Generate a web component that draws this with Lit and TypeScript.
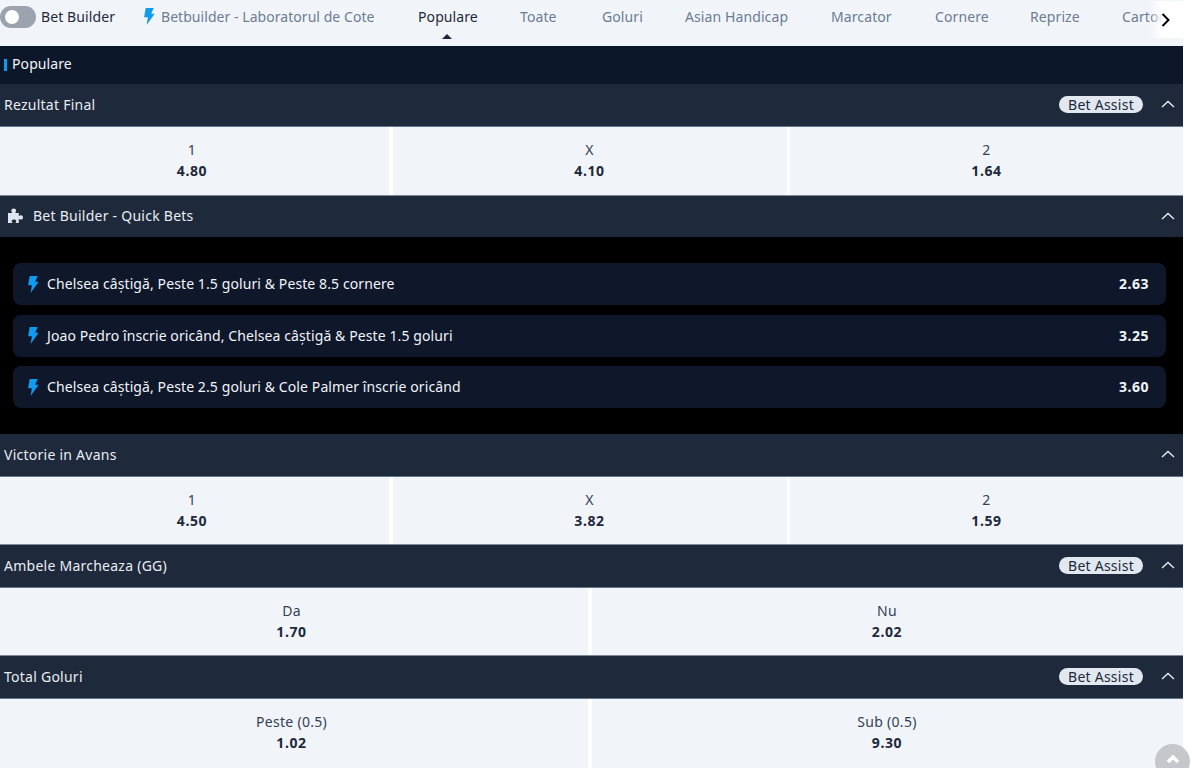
import { LitElement, html, css, svg } from "lit";
import { customElement } from "lit/decorators.js";

const bolt = (cls: string) => html`<svg class=${cls} viewBox="0 0 12 18"><path d="M2.500 0h8.500L8.300 6H12L3.500 18l1.300-8.200H.8z" fill="#0f9bee"/></svg>`;
const chevron = html`<svg class="chev" viewBox="0 0 14 8"><path d="M1 7l6-5.600L13 7" fill="none" stroke="#e6ebf2" stroke-width="1.400"/></svg>`;
const puzzle = svg`<path d="M1 6h4.200c-.6-1-.9-1.600-.9-2.300C4.300 2.300 5.400 1.500 6.700 1.500s2.400.8 2.400 2.200c0 .7-.3 1.300-.9 2.300h3.600v3c1-.6 1.500-.8 2.200-.8 1.300 0 2 1 2 2.200s-.7 2.200-2 2.200c-.7 0-1.200-.2-2.200-.8V16H8.500c.5-.9.700-1.300.700-1.900 0-1-.900-1.600-2.200-1.600s-2.300.6-2.300 1.600c0 .6.300 1 .8 1.900H1z" fill="#dfe5ee"/>`;

interface Odd { l: string; v: string }
const tabs = ["Toate", "Goluri", "Asian Handicap", "Marcator", "Cornere", "Reprize", "Cartonașe"];
const quick = [
  ["Chelsea câștigă, Peste 1.5 goluri & Peste 8.5 cornere", "2.63"],
  ["Joao Pedro înscrie oricând, Chelsea câștigă & Peste 1.5 goluri", "3.25"],
  ["Chelsea câștigă, Peste 2.5 goluri & Cole Palmer înscrie oricând", "3.60"],
];

@customElement("app-root")
export class AppRoot extends LitElement {
  static styles = css`
    :host { display: block; width: 1192px; height: 768px; overflow: hidden; background: #fff; position: relative;
      font-family: "Noto Sans", "Open Sans", sans-serif; font-size: 14px; letter-spacing: 0.1px; }
    .wrap { width: 1183px; }
    .topbar { height: 46px; background: #f1f5f9; display: flex; align-items: center; padding-bottom: 14px; box-sizing: border-box; position: relative; overflow: hidden; white-space: nowrap; color: #6b7c93; }
    .toggle { width: 36px; height: 22px; border-radius: 11px; background: #9ca3af; display: flex; align-items: center; padding-left: 5px; box-sizing: border-box; flex: none; margin-top: 2px; }
    .toggle i { width: 14px; height: 14px; border-radius: 50%; background: #fff; display: block; }
    .bb { margin-left: 5px; color: #1e293b; width: 102px; flex: none; }
    .boltTop { width: 12px; height: 17px; flex: none; margin-right: 6px; }
    .lab { width: 257px; flex: none; letter-spacing: 0.05px; }
    .tab { flex: none; }
    .tab.act { color: #1e293b; position: relative; width: 102px; }
    .tab.act::after { content: ""; position: absolute; left: 24px; top: 27px; border: 5px solid transparent; border-top: 0; border-bottom: 5px solid #1e293b; }
    .tabs { display: grid; grid-template-columns: 82px 83px 146px 104px 95px 92px 90px; }
    .next { position: absolute; right: 0; top: 1px; width: 42px; height: 37px; background: linear-gradient(90deg, rgba(255,255,255,0), #fff 30%); display: flex; align-items: center; justify-content: flex-end; padding-right: 21px; box-sizing: border-box; }
    .next svg { width: 10px; height: 14px; }
    .section { height: 38px; background: #0d172a; color: #f0f4fa; display: flex; align-items: center; padding: 0 0 3px 4px; box-sizing: border-box; gap: 5px; }
    .section i { width: 3px; height: 12px; background: #0f9bee; margin-top: 2px; }
    .head { height: 43px; box-sizing: border-box; background: #1e293b; color: #e8edf4; display: flex; align-items: center; padding: 0 8px 2px 4px; border-bottom: 1px solid #64748b; letter-spacing: 0.25px; }
    .head.nb { border-bottom: 0; height: 41px; }
    .head .name { flex: 1; display: flex; align-items: center; gap: 7px; }
    .pill { background: #e2e8f0; color: #1e293b; border-radius: 9px; height: 17px; line-height: 17px; width: 84px; text-align: center; margin-right: 18px; }
    .chev { width: 14px; height: 8px; }
    .puz { width: 19px; height: 18px; margin-left: 3px; }
    .odds { display: grid; column-gap: 3.500px; background: #fff; height: 68px; box-sizing: border-box; border-bottom: 1px solid #7c8798; }
    .odds.first { height: 69px; }
    .odds:last-child { height: 69px; border-bottom: 0; }
    .c3 { grid-template-columns: 389px 394px 393px; }
    .c2 { grid-template-columns: 588px 591px; }
    .odd { background: #f1f5f9; display: flex; flex-direction: column; align-items: center; justify-content: center; color: #334155; line-height: 21px; padding-bottom: 1px; letter-spacing: 0.3px; }
    .odds.first .odd { padding-bottom: 2px; }
    .odds:last-child .odd { padding-bottom: 3px; }
    .odd:first-child { padding-right: 5px; }
    .odd b { color: #1e293b; font-weight: 700; letter-spacing: 0.6px; }
    .quick { background: #000; height: 197px; box-sizing: border-box; padding: 26px 17px 0 13px; display: flex; flex-direction: column; gap: 9.500px; }
    .q { height: 42px; flex: none; border-radius: 8px; background: #0f172a; color: #f0f4fa; display: flex; align-items: center; padding: 0 17px 1px 14px; box-sizing: border-box; }
    .q span { flex: 1; margin-left: 8px; }
    .q b { font-weight: 700; letter-spacing: 0.5px; }
    .boltQ { width: 12px; height: 17px; flex: none; margin-top: 1px; }
    .top { position: absolute; left: 1155px; top: 744px; width: 35px; height: 35px; border-radius: 50%; background: #c5c7ca; display: flex; justify-content: center; padding-top: 10px; box-sizing: border-box; }
    .top svg { width: 14px; height: 10px; }
  `;

  private oddsRow(items: Odd[], first = false) {
    return html`<div class="odds ${items.length === 3 ? "c3" : "c2"} ${first ? "first" : ""}">
      ${items.map((o) => html`<div class="odd"><span>${o.l}</span><b>${o.v}</b></div>`)}
    </div>`;
  }

  private header(name: string, assist = true, nb = false) {
    return html`<div class="head ${nb ? "nb" : ""}"><div class="name">${name}</div>${assist ? html`<div class="pill">Bet Assist</div>` : ""}${chevron}</div>`;
  }

  render() {
    return html`<div class="wrap">
      <div class="topbar">
        <div class="toggle"><i></i></div>
        <div class="bb">Bet Builder</div>
        ${bolt("boltTop")}
        <div class="lab">Betbuilder - Laboratorul de Cote</div>
        <div class="tab act">Populare</div>
        <div class="tabs">${tabs.map((t) => html`<div class="tab">${t}</div>`)}</div>
      </div>
      <div class="section"><i></i>Populare</div>
      ${this.header("Rezultat Final")}
      ${this.oddsRow([{ l: "1", v: "4.80" }, { l: "X", v: "4.10" }, { l: "2", v: "1.64" }], true)}
      <div class="head nb"><div class="name"><svg class="puz" viewBox="0 0 19 18">${puzzle}</svg>Bet Builder - Quick Bets</div>${chevron}</div>
      <div class="quick">
        ${quick.map((q) => html`<div class="q">${bolt("boltQ")}<span>${q[0]}</span><b>${q[1]}</b></div>`)}
      </div>
      ${this.header("Victorie in Avans", false)}
      ${this.oddsRow([{ l: "1", v: "4.50" }, { l: "X", v: "3.82" }, { l: "2", v: "1.59" }])}
      ${this.header("Ambele Marcheaza (GG)")}
      ${this.oddsRow([{ l: "Da", v: "1.70" }, { l: "Nu", v: "2.02" }])}
      ${this.header("Total Goluri")}
      ${this.oddsRow([{ l: "Peste (0.5)", v: "1.02" }, { l: "Sub (0.5)", v: "9.30" }])}
    </div>
    <div class="next"><svg viewBox="0 0 10 14"><path d="M1.500 1L7.500 7l-6 6" fill="none" stroke="#000" stroke-width="2"/></svg></div>
    <div class="top"><svg viewBox="0 0 14 10"><path d="M2 8l5-5 5 5" fill="none" stroke="#fff" stroke-width="3.500"/></svg></div>`;
  }
}
